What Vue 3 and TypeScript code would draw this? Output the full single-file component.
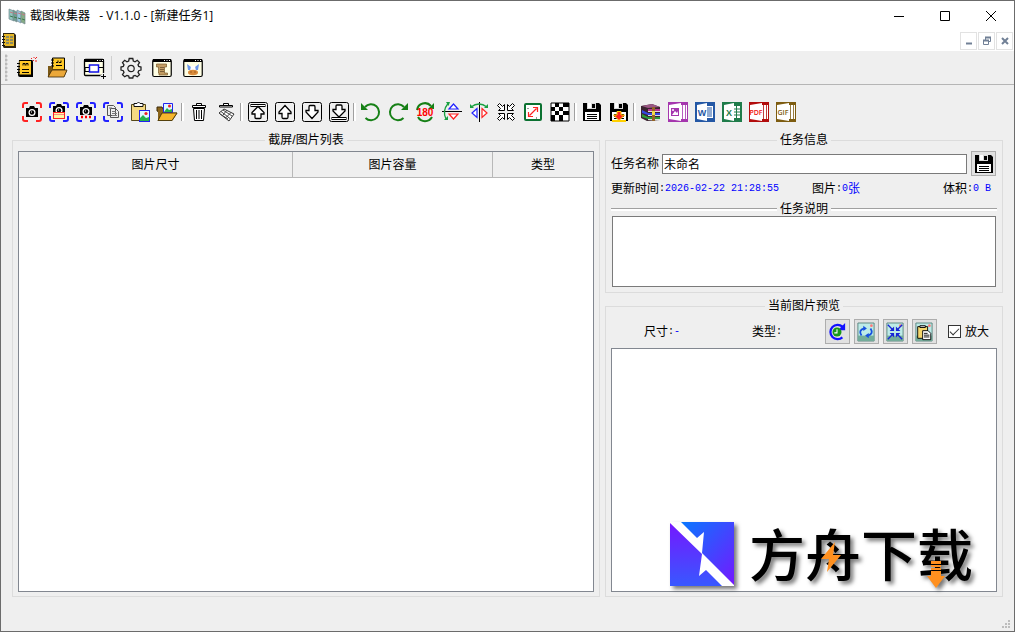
<script setup lang="ts">
import { ref } from 'vue'

interface Tool {
  name: string
  art: string
}

const corners = (c: string): string =>
  `<path d="M1 6V3q0-2 2-2h3M14 1h3q2 0 2 2v3M19 14v3q0 2-2 2h-3M6 19H3q-2 0-2-2v-3" fill="none" stroke="${c}" stroke-width="2"/>`
const camera =
  '<path d="M4 6h3l1-2h4l1 2h3v9H4z" fill="#000"/><circle cx="10" cy="10.500" r="3.500" fill="#fff"/><circle cx="10" cy="10.500" r="2.200" fill="#000"/><path d="M9 10h1" stroke="#fff"/>'
const photo =
  '<rect x="9.500" y="8.500" width="10" height="11" fill="#dff6ff" stroke="#22e"/><path d="M10 19v-3l3-3 3 3 3-1v4z" fill="#24b14c"/><circle cx="16" cy="11.500" r="1.600" fill="#e22"/>'
const frame = '<rect x=".5" y=".5" width="19" height="19" rx="2" fill="#efefef" stroke="#000"/>'
const disk =
  '<path d="M1 1h16l2 2v16H1z" fill="#000"/><path d="M5 1h9v6H5z" fill="#d8d8d8"/><path d="M6 1h3v5H6z" fill="#fff"/><path d="M10 2h3v4h-3z" fill="#000"/><path d="M3 10h14v8H3z" fill="#fff"/><path d="M5 12.500h10M5 14.500h10M5 16.500h10" stroke="#000"/>'
const folder =
  '<path d="M0 9V5h5l1 2v5z" fill="#8b651b" stroke="#3c2b08"/><path d="M1 18.500V8l2-1h12v4h4.500L15 18.500z" fill="#8b651b"/><path d="M1 18.500L5 11h15l-5 7.500z" fill="#f6b62d" stroke="#54400c" stroke-width=".8"/>'
const win = '<rect x=".75" y="1.500" width="18.500" height="17" rx="1.500" fill="#ffffe4" stroke="#000" stroke-width="1.200"/><path d="M1 1h18v3H1z" fill="#000"/><path d="M12 2.500h1M14.500 2.500h1M17 2.500h1" stroke="#fff"/>'
const up = 'M10 3.500L16 10V11.500H13V15Q13 16.500 12 16.500H8Q7 16.500 7 15V11.500H4V10Z'
const arrow = (d: string): string => `<path d="${d}" fill="#fff" stroke="#000" stroke-width="1.300"/>`
const book = (c: string, inner: string): string =>
  `<path d="M0 0h20v20H0z" fill="${c}"/><path d="M12 3h7v14h-7z" fill="#fff"/><path d="M14.500 3v14M17.500 3v14" stroke="${c}" stroke-width=".8"/><path d="M1 3l12-2v18L1 17z" fill="#fff"/>${inner}`
const office = (c: string, letter: string, extra: string): string =>
  `<path d="M0 0h20v20H0z" fill="${c}"/><path d="M11 4h7v12h-7z" fill="#fff"/>${extra}<path d="M2 3l10-2v18L2 17z" fill="#fff"/><text x="7" y="13.500" text-anchor="middle" font-size="9" font-weight="bold" font-family="Liberation Sans, sans-serif" fill="${c}">${letter}</text>`
const label = (t: string, c: string): string =>
  `<text x="7" y="12.500" text-anchor="middle" font-size="7" font-weight="600" font-family="Open Sans, sans-serif" fill="${c}">${t}</text>`
const undo = '<path d="M4 5A8 8 0 1 1 4.500 16" fill="none" stroke="#168016" stroke-width="2"/><path d="M0 1v7h7z" fill="#168016"/>'
const notebook =
  '<path d="M3 2h13q1 0 1 2v15H4q-2 0-2-2z" fill="#000"/><path d="M3.500 3H15v13.500H3.500z" fill="#ffc928"/><path d="M1 5.500h3M1 8.500h3M1 11.500h3M1 14.500h3" stroke="#000"/><path d="M7 7.500V5.500h2v2M10 7.500v-2h2v2M6 11.500h7M6 14.500h7" fill="none" stroke="#000"/>'

const fileTools: Tool[][] = [
  [
    { name: '新建任务', art: notebook + '<path d="M15 0l1 1M18 2l-1 1M18-1v1M19 1l2-2M19 3h2" stroke="#f02020"/>' },
    { name: '打开任务', art: '<path d="M5.500 0h12v13h-12z" fill="#ffc928" stroke="#000"/><path d="M4 2h3M4 5h3M4 8h3M9 4.500h2v-2M12 4.500h2v-2M9 7.500h6" fill="none" stroke="#000"/><path d="M1 19V8h4l1 3h11v2h3l-3 6z" fill="#7a5816"/><path d="M1 19l4-7h15l-3 7z" fill="#eba83a" stroke="#382707" stroke-width=".8"/>' }
  ],
  [{ name: '窗口', art: '<rect x=".5" y="1.500" width="19" height="16" rx="1" fill="#ffffe4" stroke="#000" stroke-width="1.300"/><path d="M0 1h20v3H0z" fill="#000"/><path d="M13 2.500h1M15.500 2.500h1M18 2.500h1" stroke="#fff"/><path d="M1 13.500V9.500h5M1 13.500h5M14 9.500h5" fill="none" stroke="#000"/><rect x="5.500" y="7" width="9" height="7" fill="#fff" stroke="#1010e8" stroke-width="1.500"/><path d="M19.500 15v6M16.500 18.500h6" stroke="#efefef" stroke-width="3"/><path d="M19.500 16v5M17 18.500h5" stroke="#000"/>' }],
  [
    { name: '设置', art: '<path d="M8.200.5h3.600l.5 2.500 1.800.8 2.200-1.500 2.200 2.300-1.500 2.200.7 1.700 2.300.6v3l-2.300.6-.7 1.700 1.500 2.300-2.200 2.100-2.200-1.400-1.800.7-.5 1.900H8.200l-.5-1.900-1.800-.7-2.200 1.400-2.200-2.100L3 14.400l-.7-1.700-2.300-.6v-3l2.300-.6.7-1.700-1.500-2.200L3.700 2.300l2.200 1.500 1.800-.8z" fill="#efefef" stroke="#222" stroke-width="1.300"/><circle cx="10" cy="10.500" r="3.200" fill="#efefef" stroke="#222" stroke-width="1.200"/>' },
    { name: '日志', art: win + '<path d="M4.500 6h10v3h-2v6h3v2H7v-2h-.500V9h-2z" fill="#c39d63" stroke="#795a2c" stroke-width=".7"/><path d="M8 9.500h4M8 11.500h4M8 13.500h4" stroke="#6b5230" stroke-width=".8"/>' },
    { name: '关于', art: win + '<path d="M4 6l4 3h4l4-3-1 6H5z" fill="#6c97ea"/><path d="M8 8h4l1 5H7z" fill="#fff"/><ellipse cx="10" cy="14.500" rx="5" ry="2.800" fill="#d98b3b"/><path d="M7.500 14h1M11.500 14h1" stroke="#6b3205"/>' }
  ]
]

const editTools: Tool[][] = [
  [
    { name: '截屏', art: corners('#f22') + camera },
    { name: '窗口截图', art: corners('#22f') + '<g transform="translate(0 -2)">' + camera + '</g><rect x="4.500" y="10.500" width="11" height="6" fill="#fff6a0" stroke="#f22"/><path d="M5 12.500h10" stroke="#f88"/>' },
    { name: '连续截图', art: corners('#22f') + '<g transform="translate(0 -1)">' + camera + '</g><path d="M3 13h14v4H3z" fill="#efefef"/><path d="M5 15h2M9 15h2M13 15h2" stroke="#f00" stroke-width="2.500"/>' },
    { name: '复制截图', art: corners('#22f') + '<path d="M4.500 3.500h6l2 2v8h-8zM7.500 6.500h5l3 3v6h-8z" fill="#eee" stroke="#555"/><path d="M6 6h3M9 9.500h4M9 11.500h5M9 13.500h5" stroke="#777"/>' },
    { name: '粘贴图片', art: '<path d="M1.500 2.500h14v16h-14z" fill="#f5d982" stroke="#564819"/><path d="M4 4.500V1.500h3L8.500 0 10 1.500h3v3z" fill="#fff" stroke="#111"/>' + photo },
    { name: '打开图片', art: folder + '<path d="M6.500 1.500h9v9h-9z" fill="#dff6ff" stroke="#22e"/><path d="M7 10l3-4 2 2 3-1v3z" fill="#24b14c"/><circle cx="12.500" cy="4" r="1.500" fill="#e22"/><path d="M5 11h15l-5 7.500H1z" fill="#f6b62d" stroke="#54400c"/>' }
  ],
  [
    { name: '删除', art: '<path d="M4.500 6.500h11l-1 12h-9z" fill="#fff" stroke="#000"/><path d="M7.500 8v9M10 8v9M12.500 8v9" stroke="#000"/><path d="M3.500 3.500h13v2h-13zM7.500 3V1.500h5V3" fill="#fff" stroke="#000"/>' },
    { name: '清空', art: '<path d="M3 11l5-4 10 5-5 7z" fill="#fff" stroke="#333"/><path d="M5 9.500l9 7M7 8l9 6M4 12l8 5M7 13l4-5M10 15.500l5-5" stroke="#444"/><path d="M3.500 3.500h13v1.500h-13zM7.500 3V1.500h5V3" fill="#fff" stroke="#000"/>' }
  ],
  [
    { name: '置顶', art: frame + '<rect x="3" y="2.500" width="14" height="2" fill="#fff" stroke="#000"/>' + arrow('M10 4.500l6 6v1.500h-3v3.500q0 1-1 1H8q-1 0-1-1V12H4v-1.500z') },
    { name: '上移', art: frame + arrow(up) },
    { name: '下移', art: frame + '<g transform="rotate(180 10 10)">' + arrow(up) + '</g>' },
    { name: '置底', art: frame + '<rect x="3" y="15.500" width="14" height="2" fill="#fff" stroke="#000"/>' + arrow('M10 15l6-6V7.500h-3V4q0-1-1-1H8Q7 3 7 4v3.500H4V9z') }
  ],
  [
    { name: '向左旋转', art: undo },
    { name: '向右旋转', art: '<g transform="matrix(-1 0 0 1 20 0)">' + undo + '</g>' },
    { name: '旋转180度', art: '<path d="M2 8A8 8 0 0 1 16 4M3 15a8 8 0 0 0 14 0" fill="none" stroke="#168016" stroke-width="2"/><path d="M19 1v6h-6z" fill="#168016"/><text x="10" y="13.500" text-anchor="middle" font-size="10" font-weight="bold" font-family="Liberation Sans, sans-serif" fill="#f00">180</text>' },
    { name: '垂直翻转', art: '<path d="M0 9.500h20" stroke="#000"/><path d="M7 7l4.500-5L16 7z" fill="#fff" stroke="#22f" stroke-width="1.200"/><path d="M7 12l4.500 5 4.500-5z" fill="#fff" stroke="#f22" stroke-width="1.200"/><path d="M6 1.500Q0 9 4 17" fill="none" stroke="#18a040" stroke-width="1.300"/><path d="M4 0h4L6.500 4zM2 18h4v-4z" fill="#18a040"/>' },
    { name: '水平翻转', art: '<path d="M10.500 0v20" stroke="#000"/><path d="M8 6.500L3 11l5 4.500z" fill="#fff" stroke="#22f" stroke-width="1.200"/><path d="M13 6.500l5 4.500-5 4.500z" fill="#fff" stroke="#f22" stroke-width="1.200"/><path d="M2 5q8-6 16 0" fill="none" stroke="#18a040" stroke-width="1.300"/><path d="M1 2v4h4zM19 2v4h-4z" fill="#18a040"/>' },
    { name: '适应大小', art: '<path id="fit-arrow" d="M1.500 3.500l2-2 3 3 2-2v6h-6l2-2-3-3z" fill="#fff" stroke="#000"/><path d="M18.500 3.500l-2-2-3 3-2-2v6h6l-2-2 3-3zM1.500 16.500l2 2 3-3 2 2v-6h-6l2 2-3 3zM18.500 16.500l-2 2-3-3-2 2v-6h6l-2 2 3 3z" fill="#fff" stroke="#000"/>' },
    { name: '调整尺寸', art: '<rect x="2" y="2" width="16" height="16" rx="1" fill="#fff" stroke="#0b7131" stroke-width="2"/><path d="M4 6.500h2M13.500 15v2" fill="none" stroke="#999"/><path d="M6.500 13.500l7-7M10 5.500h4.500V10M5.500 10v4.500H10" fill="none" stroke="#f22" stroke-width="1.200"/>' },
    { name: '马赛克', art: '<path d="M1 1h18v18H1z" fill="#fff" stroke="#000"/><path d="M5 1h4v4H5zM13 1h6v4h-6zM1 5h4v4H1zM9 5h4v4H9zM5 9h4v4H5zM13 9h6v4h-6zM1 13h4v6H1zM9 13h4v6H9z" fill="#000"/>' }
  ],
  [
    { name: '保存', art: disk },
    { name: '另存为', art: disk + '<path d="M8 9.500h4v3.500h3.500L10 18.500 4.500 13H8z" fill="#f22" stroke="#ffd000"/><path d="M3 19h14" stroke="#ffd000" stroke-width="2"/>' }
  ],
  [
    { name: '导出压缩包', art: '<path d="M0 4l11-2 8 3v13l-13 1-6-3z" fill="#3b2430"/><path d="M1 4l10-2 8 3-12 1z" fill="#9b5784"/><path d="M7 7h12v2H7z" fill="#b83391"/><path d="M1 8l6 3h12v2H7l-6-2z" fill="#3546e0"/><path d="M1 12l6 3h12v2H7l-6-2z" fill="#2b9c37"/><path d="M7 9.500h12M7 13.500h12M7 17.500h12" stroke="#ddd"/><path d="M11 5h3v14h-3z" fill="#956426"/><path d="M11 9h3v4h-3z" fill="#f3db4a"/>' },
    { name: '导出图片', art: book('#a536ae', '<path d="M3 6h8v8H3z" fill="#a536ae"/><path d="M4 13l3-4 2 2 1-2v4z" fill="#fff"/><circle cx="5" cy="8" r="1" fill="#fff"/>') },
    { name: '导出Word', art: office('#2458a5', 'W', '<path d="M12 6h5M12 8h5M12 10h5M12 12h5M12 14h5" stroke="#2458a5"/>') },
    { name: '导出Excel', art: office('#1f7c4a', 'X', '<path d="M11 7h7M11 10h7M11 13h7M14.500 4v12" stroke="#1f7c4a"/>') },
    { name: '导出PDF', art: book('#b20d0d', label('PDF', '#f01010')) },
    { name: '导出GIF', art: book('#7d5c10', label('GIF', '#7d5c10')) }
  ]
]

const paper = '<path d="M1 0h18v20H1z" fill="#bdebe7" stroke="#56817a"/><path d="M1 14h18v6H1z" fill="#73ac9a"/><circle cx="16" cy="3" r="1.500" fill="#f77"/>'
const previewTools: Tool[] = [
  { name: '刷新', art: '<path d="M16 4A8 8 0 1 0 16 16" fill="none" stroke="#11f" stroke-width="2.500"/><path d="M19 0v8h-8z" fill="#11f"/><circle cx="10" cy="10" r="5" fill="#189818"/><path d="M10 7v4H7" fill="none" stroke="#fff" stroke-width="1.200"/>' },
  { name: '更新图片', art: paper + '<path d="M5 14q-4-6 3-8M15 6q4 6-3 8" fill="none" stroke="#1550e0" stroke-width="2"/><path d="M7 3l4 3-4 3zM13 17l-4-3 4-3z" fill="#1550e0"/>' },
  { name: '缩小', art: paper + '<path d="M2 2l6 6M18 2l-6 6M2 18l6-6M18 18l-6-6" stroke="#1724d7" stroke-width="1.500"/><path d="M9 4v5H4zM11 4v5h5zM9 16v-5H4zM11 16v-5h5z" fill="#1724d7"/>' },
  { name: '复制图片', art: paper + '<path d="M3 4h11v13H3z" fill="#f5d66c" stroke="#000"/><path d="M5.500 5V3h6v2z" fill="#ddd" stroke="#000"/><path d="M8.500 8.500h6l3 3v7h-9z" fill="#fff" stroke="#000"/><path d="M10 11.500h4M10 13.500h6M10 15.500h6" stroke="#000"/>' }
]

const columns = ['图片尺寸', '图片容量', '类型']
const taskName = ref('未命名')
const taskNote = ref('')
const enlarge = ref(true)
</script>

<template>
  <main class="window">
    <header class="titlebar">
      <svg class="app-icon" width="18" height="18" viewBox="0 0 18 18">
        <g stroke="#768b91" stroke-width=".7">
          <path d="M1 2l5 2v10l-5-2z" fill="#8fc4bd" /><path d="M5 3l4 2v10l-4-2z" fill="#6f9e91" />
          <path d="M9 3l4 2v11l-4-2z" fill="#9ac8df" /><path d="M13 4l4 2v11l-4-2z" fill="#86ac84" />
        </g>
        <path d="M2 5l3 1M6 6l3 1M10 6l3 1M14 7l3 1" stroke="#c47a86" /><path d="M2 9l3 1M6 10l3 1M10 11l3 1M14 12l3 1" stroke="#3c794e" />
      </svg>
      <h1>截图收集器&nbsp; &nbsp;- V1.1.0 - [新建任务1]</h1>
      <div class="captions">
        <button aria-label="最小化"><svg width="12" height="12"><path d="M1 6.500h10" stroke="#000" /></svg></button>
        <button aria-label="最大化"><svg width="12" height="12"><path d="M1.500 1.500h9v9h-9z" fill="none" stroke="#000" /></svg></button>
        <button aria-label="关闭"><svg width="12" height="12"><path d="M1 1l10 10M11 1L1 11" stroke="#000" /></svg></button>
      </div>
    </header>

    <div class="menubar">
      <svg width="16" height="16" viewBox="0 0 16 16">
        <path d="M2 0h11l2 2v13H3l-1-1z" fill="#302813" /><path d="M3 1h10v12H3z" fill="#e7b725" />
        <path d="M1 3.500h3M1 6.500h3M1 9.500h3M1 12.500h3" stroke="#111" /><path d="M5 3h3v2H5zM9 3h3v2H9zM5 6h3v2H5zM9 6h3v2H9zM5 9h3v2H5zM9 9h3v2H9z" fill="#8b8a64" />
      </svg>
      <div class="child-captions">
        <button aria-label="最小化子窗口"><svg width="10" height="10"><path d="M2 7.500h6" stroke="#718096" stroke-width="2" /></svg></button>
        <button aria-label="还原子窗口"><svg width="10" height="10"><path d="M3.500 4V1.500h5v4H7M1.500 4.500h5v4h-5z" fill="none" stroke="#718096" /><path d="M3 1.500h6M1 4.500h6" stroke="#718096" stroke-width="2" /></svg></button>
        <button aria-label="关闭子窗口"><svg width="10" height="10"><path d="M2 2l6 6M8 2L2 8" stroke="#718096" stroke-width="2" /></svg></button>
      </div>
    </div>

    <nav class="file-tools" aria-label="任务">
      <span class="handle"></span>
      <div v-for="(group, g) in fileTools" :key="g" class="group">
        <button v-for="tool in group" :key="tool.name" :aria-label="tool.name">
          <svg width="20" height="20" viewBox="0 0 20 20" v-html="tool.art"></svg>
        </button>
      </div>
    </nav>

    <nav class="edit-tools" aria-label="图片">
      <div v-for="(group, g) in editTools" :key="g" class="group">
        <button v-for="tool in group" :key="tool.name" :aria-label="tool.name">
          <svg width="20" height="20" viewBox="0 0 20 20" v-html="tool.art"></svg>
        </button>
      </div>
    </nav>

    <div class="content">
      <fieldset class="list-panel">
        <legend>截屏/图片列表</legend>
        <div class="list">
          <table>
            <colgroup><col /><col class="volume" /><col class="kind" /></colgroup>
            <thead><tr><th v-for="column in columns" :key="column" scope="col">{{ column }}</th></tr></thead>
          </table>
        </div>
      </fieldset>

      <div class="side">
        <fieldset>
          <legend>任务信息</legend>
          <div class="name-row">
            <label for="task-name">任务名称</label>
            <input id="task-name" v-model="taskName" type="text" />
            <button class="raised" aria-label="保存任务"><svg width="20" height="20" viewBox="0 0 20 20" v-html="disk"></svg></button>
          </div>
          <div class="facts">
            <span>更新时间<i>:</i><b>2026-02-22 21:28:55</b></span>
            <span>图片<i>:</i><b>0</b><em>张</em></span>
            <span class="end">体积<i>:</i><b>0 B</b></span>
          </div>
          <label class="divider" for="task-note">任务说明</label>
          <textarea id="task-note" v-model="taskNote"></textarea>
        </fieldset>

        <fieldset class="preview-panel">
          <legend>当前图片预览</legend>
          <div class="preview-row">
            <span class="dimension">尺寸<i>:</i><b>-</b></span>
            <span class="type">类型<i>:</i></span>
            <div class="preview-tools">
              <button v-for="tool in previewTools" :key="tool.name" class="raised" :aria-label="tool.name">
                <svg width="18" height="20" viewBox="0 0 20 20" v-html="tool.art"></svg>
              </button>
            </div>
            <label class="check"><input v-model="enlarge" type="checkbox" />放大</label>
          </div>
          <div class="preview">
            <div class="brand">
              <svg width="64" height="64" viewBox="0 0 64 64">
                <defs>
                  <linearGradient id="brand-a" x1="0" y1="0" x2="1" y2="1"><stop offset="0" stop-color="#0878ff" /><stop offset="1" stop-color="#7518ff" /></linearGradient>
                  <linearGradient id="brand-b" x1="0" y1="0" x2="0" y2="1"><stop offset="0" stop-color="#7518ff" /><stop offset="1" stop-color="#3858ff" /></linearGradient>
                </defs>
                <path d="M0 0h64v64H0z" fill="#fff" />
                <path d="M11 0h53v63L32 31l2-21-7 6z" fill="url(#brand-a)" />
                <path d="M0 1l32 31-3 22 7-6 16 16H0z" fill="url(#brand-b)" />
              </svg>
              <span class="brand-name">方舟下载</span>
              <svg class="bolt" width="20" height="30" viewBox="0 0 20 30"><path d="M14 0L0 17h8L6 30l14-17h-8z" fill="#ff901f" /></svg>
              <svg class="down" width="18" height="28" viewBox="0 0 18 28"><path d="M4 0h10v3H4zM4 4h10v2H4zM4 7h10v2H4zM4 10h10v5h4L9 27 0 15h4z" fill="#ff901f" /></svg>
            </div>
          </div>
        </fieldset>
      </div>
    </div>
    <footer>
      <svg width="9" height="9" viewBox="0 0 9 9"><path d="M6 0h2v2H6zM3 3h2v2H3zM6 3h2v2H6zM0 6h2v2H0zM3 6h2v2H3zM6 6h2v2H6z" fill="#bdbdbd" /></svg>
    </footer>
  </main>
</template>

<style>
body { margin: 0; }
</style>

<style scoped>
* { box-sizing: border-box; }
.window {
  display: flex; flex-direction: column; min-height: 100vh;
  border: 1px solid #6b6b6b; background: #efefef; color: #000;
  font: 12px/16px "Liberation Sans", "Noto Sans CJK SC", sans-serif;
}
button { display: flex; align-items: center; justify-content: center; padding: 0; border: 0; background: none; color: inherit; }
svg { display: block; flex: none; overflow: visible; }
.titlebar { display: flex; align-items: center; height: 29px; padding-left: 7px; background: #fff; }
h1 { margin: 0 0 0 4px; font: 12px/16px "Open Sans", "Noto Sans CJK SC", sans-serif; white-space: pre; }
.captions { display: flex; height: 100%; margin-left: auto; }
.captions button { width: 46px; }
.menubar { display: flex; justify-content: space-between; align-items: center; height: 21px; background: #fff; }
.child-captions { display: flex; gap: 1px; margin-right: 1px; }
.child-captions button { width: 17px; height: 18px; border: 1px solid #e2e2e2; }
.file-tools { display: flex; align-items: center; height: 34px; padding-left: 4px; border-bottom: 1px solid #b5b5b5; }
.handle { width: 5px; height: 27px; background: radial-gradient(circle at 1px 2px, #bbb 1px, transparent 2px) 0 0 / 5px 4px repeat-y; }
.group { display: flex; align-items: center; }
.group button { width: 31px; height: 24px; }
.group + .group::before { content: ""; width: 1px; height: 24px; margin: 0 3px 0 2px; background: #cfcfcf; }
.edit-tools { display: flex; align-items: center; height: 47px; padding: 7px 0 0 17px; }
.edit-tools .group button { width: 27px; }
.edit-tools .group + .group::before { width: 2px; height: 18px; margin: 0 1px; border-left: 1px solid #a0a0a0; background: #fff; }
.content { flex: 1; display: grid; grid-template-columns: minmax(0, 588fr) minmax(0, 398fr); gap: 5px; padding: 0 11px; }
fieldset { display: flex; flex-direction: column; min-width: 0; margin: 0; padding: 3px 5px 4px; border: 1px solid #dcdcdc; }
legend { margin: 0 auto; padding: 1px 3px 0; line-height: 15px; }
.list { flex: 1; border: 1px solid #828790; background: #fff; }
table { width: 100%; border-collapse: separate; border-spacing: 0; table-layout: fixed; }
.volume { width: 200px; }
.kind { width: 100px; }
th { height: 26px; padding: 0; border: solid #b8b8b8; border-width: 0 1px 1px 0; background: #efefef; font-weight: normal; }
th:last-child { border-right: 0; }
.side { display: flex; flex-direction: column; gap: 5px; min-width: 0; }
.name-row { display: flex; align-items: center; gap: 3px; }
input[type="text"] { flex: 1; min-width: 0; height: 20px; padding: 0 1px; border: 1px solid #7a7a7a; background: #fff; font: inherit; color: #000; }
.raised { width: 25px; height: 25px; border: 1px solid #adadad; background: #e1e1e1; }
.name-row .raised { margin: 0 1px; }
.facts { display: grid; grid-template-columns: 201px 1fr auto; align-items: center; height: 16px; margin: 5px 6px 5px 0; }
.facts span, .dimension, .type { display: flex; align-items: center; }
i, b { font: 10px/16px "Liberation Mono", monospace; }
b, em { color: #00f; white-space: pre; }
em { font-style: normal; }
.divider { display: flex; align-items: center; gap: 3px; height: 14px; }
.divider::before, .divider::after { content: ""; flex: 1; height: 2px; border-top: 1px solid #a0a0a0; background: #fff; }
textarea { display: block; height: 71px; margin: 0 1px 1px; padding: 2px; border: 1px solid #7a7a7a; border-radius: 0; background: #fff; resize: none; font: inherit; }
.preview-panel { flex: 1; }
.preview-row { display: flex; align-items: center; height: 25px; margin: 2px 0 4px; padding: 0 8px 0 33px; }
.type { margin-left: 72px; }
.preview-tools { display: flex; gap: 4px; margin-left: auto; }
.check { display: flex; align-items: center; gap: 4px; margin-left: 11px; }
.check input { appearance: none; width: 13px; height: 13px; margin: 0; border: 1px solid #333; background: #fff; }
.check input:checked::before { content: ""; display: block; width: 8px; height: 4px; margin: 2px 1px; border: solid #333; border-width: 0 0 1px 1px; transform: rotate(-45deg); }
.preview { position: relative; flex: 1; min-height: 240px; border: 1px solid #828790; background: #fff; }
.brand { position: absolute; right: 23px; bottom: 5px; display: flex; align-items: flex-start; gap: 15px; filter: drop-shadow(3px 3px 2px #0008); }
.brand-name { height: 64px; font: 500 56px/60px "Noto Sans CJK SC", sans-serif; }
.bolt { position: absolute; left: 151px; top: 20px; }
.down { position: absolute; right: 28px; top: 39px; }
footer { display: flex; justify-content: flex-end; align-items: flex-end; height: 34px; padding: 0 3px 2px; }
</style>
